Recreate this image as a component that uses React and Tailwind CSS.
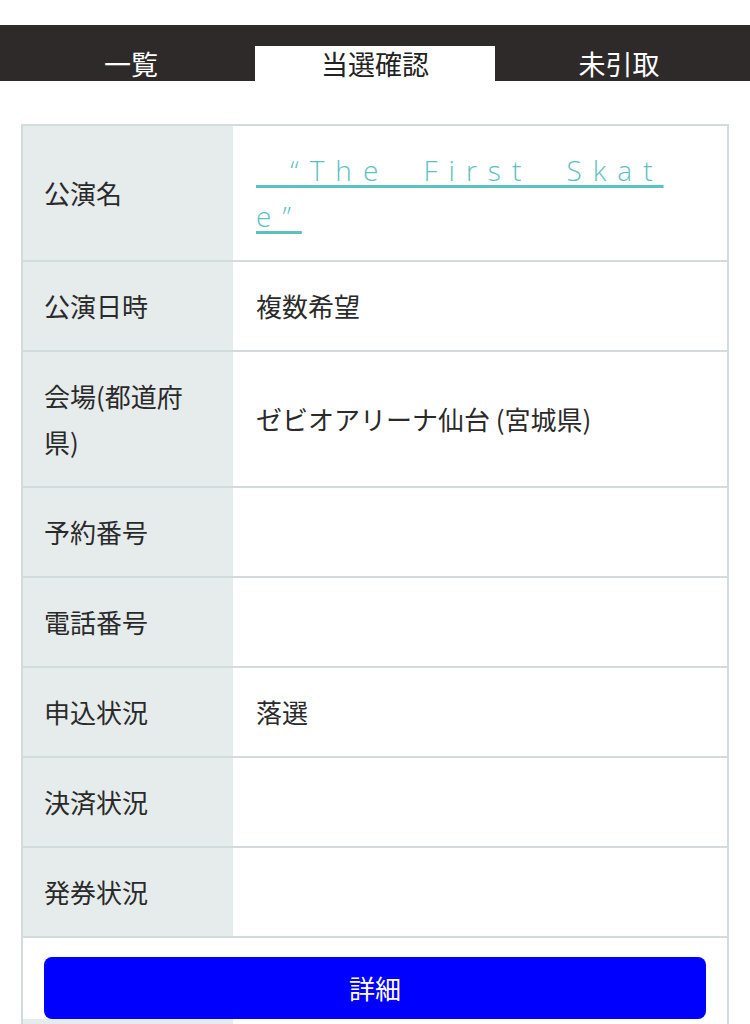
import React from 'react'

const rows = [
  { label: '公演日時', value: '複数希望' },
  { label: '会場(都道府県)', value: 'ゼビオアリーナ仙台 (宮城県)' },
  { label: '予約番号', value: '' },
  { label: '電話番号', value: '' },
  { label: '申込状況', value: '落選' },
  { label: '決済状況', value: '' },
  { label: '発券状況', value: '' },
]

function Row({ label, children }) {
  return (
    <div className="flex border-b-2 border-[#d3dcdc]">
      <div className="w-[210px] shrink-0 bg-[#e6ecec] pl-[21px] pr-[24px] py-[21px] leading-[46px] flex items-center">
        <span>{label}</span>
      </div>
      <div className="flex-1 pl-[23px] pr-[20px] py-[21px] leading-[46px] flex items-center">
        {children}
      </div>
    </div>
  )
}

export default function App() {
  return (
    <div
      className="min-h-screen bg-white text-[26px] text-[#2a2a2a]"
      style={{ fontFamily: '"Noto Sans CJK JP", "Noto Sans", sans-serif' }}
    >
      <div className="h-[25px]" />

      {/* Tabs */}
      <nav className="h-[56px] bg-[#2e2a2a] flex items-end gap-[4px] px-[11px] text-[27px]">
        <div className="flex-1 h-[35px] flex items-center justify-center text-white leading-none">一覧</div>
        <div className="flex-1 h-[35px] flex items-center justify-center bg-white text-[#222] leading-none">当選確認</div>
        <div className="flex-1 h-[35px] flex items-center justify-center text-white leading-none">未引取</div>
      </nav>

      {/* Detail table */}
      <div className="mt-[43px] mx-[21px] border-x-2 border-t-2 border-[#d3dcdc]">
        <Row label="公演名">
          <a
            href="#"
            className="block w-[413px] break-all text-[28px] text-[#5cc2bf] underline decoration-[3px] underline-offset-[4px] tracking-[11px] [word-spacing:16px] font-light"
            style={{ fontFamily: '"Open Sans", "Noto Sans CJK JP", sans-serif' }}
          >
            {'\u00a0“The First Skate”'}
          </a>
        </Row>
        {rows.map((r) => (
          <Row key={r.label} label={r.label}>
            {r.value}
          </Row>
        ))}

        {/* Button row */}
        <div className="px-[21px] pt-[19px] bg-white">
          <button className="w-full h-[62px] rounded-[8px] bg-[#0000ff] text-white text-[26px] leading-none">
            詳細
          </button>
        </div>
        <div className="flex">
          <div className="w-[210px] h-[5px] bg-[#e6ecec]" />
        </div>
      </div>
    </div>
  )
}
